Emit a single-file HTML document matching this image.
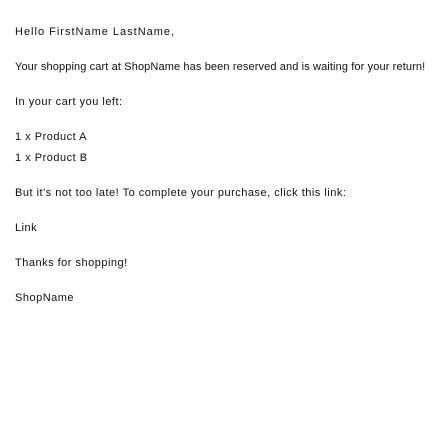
<!DOCTYPE html>
<html><head><style>
body{margin:0;background:#fff;width:437px;height:437px;overflow:hidden;font-family:"Liberation Sans","DejaVu Sans",sans-serif;font-size:11px;color:#111;letter-spacing:0.5px;}
div{position:absolute;left:15px;line-height:12px;white-space:nowrap;}
</style></head><body>
<div style="top:26px;letter-spacing:1px">Hello FirstName LastName,</div>
<div style="top:61px;letter-spacing:0.12px">Your shopping cart at ShopName has been reserved and is waiting for your return!</div>
<div style="top:96px">In your cart you left:</div>
<div style="top:131px">1 x Product A</div>
<div style="top:152px">1 x Product B</div>
<div style="top:187px">But it's not too late! To complete your purchase, click this link:</div>
<div style="top:222px">Link</div>
<div style="top:257px">Thanks for shopping!</div>
<div style="top:292px">ShopName</div>
</body></html>
